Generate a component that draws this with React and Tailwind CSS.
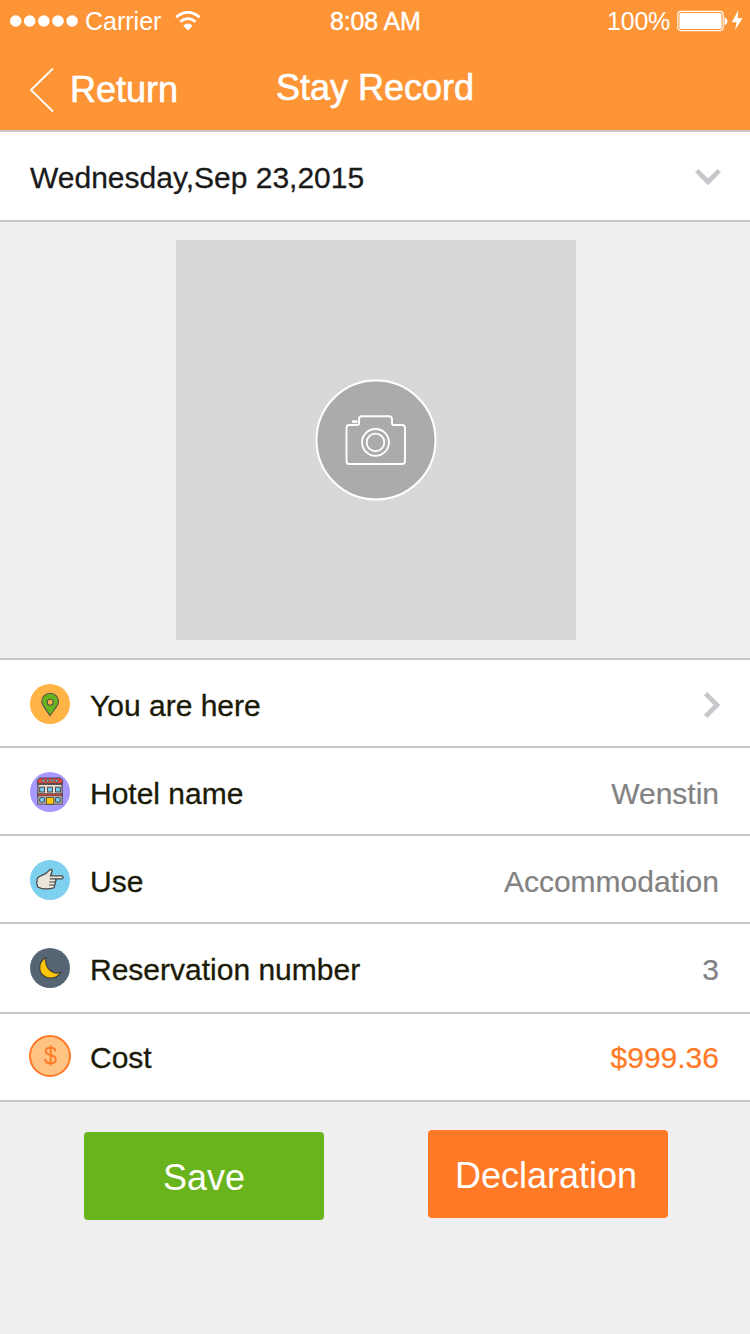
import React from "react";

function StatusBar() {
  return (
    <div className="relative flex h-[42px] items-center justify-between pl-[10px] pr-[7px] text-[25px]">
      <div className="flex items-center">
        <svg className="h-[14px] w-[70px]" viewBox="0 0 70 14" fill="#fff">
          <circle cx="5.7" cy="7" r="5.8" />
          <circle cx="19.7" cy="7" r="5.8" />
          <circle cx="33.8" cy="7" r="5.8" />
          <circle cx="48" cy="7" r="5.8" />
          <circle cx="62.1" cy="7" r="5.8" />
        </svg>
        <span className="ml-[5px] w-[78px] pt-px">Carrier</span>
        <svg className="ml-[12px] h-[20px] w-[26px]" viewBox="0 0 26 20" fill="none" stroke="#fff">
          <path d="M1.2 6.2 Q12.8 -3.6 24.6 6.2" strokeWidth="2.9" />
          <path d="M5.2 10.8 Q12.8 4.6 20.6 10.8" strokeWidth="2.7" />
          <path d="M8.2 14.8 Q12.8 10.4 17.6 14.8 L12.9 19.6 Z" fill="#fff" stroke="none" />
        </svg>
      </div>
      <div className="flex items-center">
        <span className="w-[63px] pt-px tracking-[-0.2px]">100%</span>
        <svg className="ml-[7px] h-[22px] w-[66px]" viewBox="0 0 66 22">
          <rect x="0.8" y="1.4" width="45.4" height="19.2" rx="3" fill="none" stroke="#fff" strokeWidth="1.1" />
          <rect x="2.4" y="3" width="42.2" height="16" rx="1.6" fill="#fff" />
          <path d="M47.5 7.2 Q50.4 8.4 50.4 11.2 Q50.4 14 47.5 15.2 Z" fill="#fff" />
          <path d="M61.2 0.2 L54.8 12.2 H59.6 L58 20 L65.6 8.2 H60.9 Z" fill="#fff" />
        </svg>
      </div>
      <span className="absolute left-[330px] top-[3px] leading-[37px] tracking-[-0.15px] [-webkit-text-stroke:0.4px_white]">8:08 AM</span>
    </div>
  );
}

function Header() {
  return (
    <header className="h-[132px] border-b-2 border-[#c8c7cc] bg-[#fd9536] text-white">
      <StatusBar />
      <div className="grid h-[88px] grid-cols-[276px_1fr] text-[36px] [-webkit-text-stroke:0.6px_white]">
        <div className="flex items-center pl-[29px] pt-[7px]">
          <svg className="h-[46px] w-[26px]" viewBox="0 0 26 46" fill="none" stroke="#fff" strokeWidth="1.8">
            <path d="M24 1.5 L2 23 L24 44.5" />
          </svg>
          <span className="ml-[15px]">Return</span>
        </div>
        <div className="flex items-center pt-[4px]">Stay Record</div>
      </div>
    </header>
  );
}

function PinIcon() {
  return (
    <svg className="size-[42px]" viewBox="0 0 42 42">
      <circle cx="21" cy="21" r="20" fill="#ffb445" />
      <path d="M21 32.6 C18 27.5 12.8 23 12.8 18.6 A8.3 8.3 0 0 1 29.5 18.6 C29.5 23 24.2 27.5 21 32.6 Z" fill="#69b41e" stroke="#51524a" strokeWidth="1.1" />
      <circle cx="21.2" cy="19.2" r="3" fill="#ffb445" stroke="#51524a" strokeWidth="1.1" />
    </svg>
  );
}

function HotelIcon() {
  return (
    <svg className="size-[42px]" viewBox="0 0 42 42">
      <circle cx="21" cy="21" r="20" fill="#a899ff" />
      <rect x="9" y="13" width="24" height="20" fill="#e6e0d6" stroke="#4c4544" strokeWidth="1.2" />
      <path d="M10.5 7 H31.5 L33.6 9.5 V12.8 H8.4 V9.5 Z" fill="#df4b3f" stroke="#4c4544" strokeWidth="1" />
      <path d="M9 13.2 H33" stroke="#4c4544" strokeWidth="1.4" strokeDasharray="1.5 1" />
      <g fill="#7dcdec" stroke="#4c4544" strokeWidth="0.7">
        <circle cx="14.5" cy="9.8" r="1.3" />
        <circle cx="18.8" cy="9.8" r="1.3" />
        <circle cx="23.2" cy="9.8" r="1.3" />
        <circle cx="27.5" cy="9.8" r="1.3" />
      </g>
      <g fill="#76cbee" stroke="#4c4544" strokeWidth="1">
        <rect x="10.7" y="16.2" width="4.8" height="4.8" />
        <rect x="18.6" y="16.2" width="4.8" height="4.8" />
        <rect x="26.5" y="16.2" width="4.8" height="4.8" />
      </g>
      <rect x="8.4" y="22.7" width="25.2" height="2.2" fill="#c9463b" stroke="#4c4544" strokeWidth="0.8" />
      <rect x="9.4" y="25.4" width="23.2" height="7.4" fill="#aaa6a0" />
      <g fill="#76cbee" stroke="#4c4544" strokeWidth="0.9">
        <rect x="10.7" y="26.6" width="4.8" height="4.6" rx="1.2" />
        <rect x="26.5" y="26.6" width="4.8" height="4.6" rx="1.2" />
      </g>
      <rect x="17.4" y="26.6" width="7.4" height="6.6" fill="#ffc60a" stroke="#4c4544" strokeWidth="0.8" />
    </svg>
  );
}

function HandIcon() {
  return (
    <svg className="size-[42px]" viewBox="0 0 42 42">
      <circle cx="21" cy="21" r="20" fill="#7dd1ef" />
      <path d="M8.3 19.4 C10 16.6 14 16.4 17 14.4 C19.3 12.5 20.4 10 22.8 10.5 C23.7 12 22.3 14.8 21.4 16.9 H33.2 Q35 18.4 33.2 19.8 H26.7 Q27.8 21.5 26 23 Q27.2 24.8 25.2 26 Q26.2 28.2 23.8 29.2 C20 30.4 16 30 12.3 29.4 L8.7 28 C7.6 25 7.6 22 8.3 19.4 Z" fill="#ebe5da" stroke="#4c4a49" strokeWidth="1.3" strokeLinejoin="round" />
      <path d="M26.7 19.8 H21.2 M26 23 H20.8 M25.2 26 H20.4" fill="none" stroke="#4c4a49" strokeWidth="1.2" strokeLinecap="round" />
    </svg>
  );
}

function MoonIcon() {
  return (
    <svg className="size-[42px]" viewBox="0 0 42 42">
      <circle cx="21" cy="21" r="20" fill="#566573" />
      <path d="M16.9 10.6 C9.6 14.2 9 23.8 14 28.2 C19.4 33 28.2 31.7 31.9 25.4 C23 28.2 15.2 20.5 16.9 10.6 Z" fill="#ffc60a" stroke="#46443c" strokeWidth="1.2" strokeLinejoin="round" />
    </svg>
  );
}

function CostIcon() {
  return (
    <svg className="size-[42px]" viewBox="0 0 42 42">
      <circle cx="21" cy="21" r="20" fill="#ffc384" stroke="#ff7926" strokeWidth="2" />
      <path d="M26.5 16.4 C26.3 14 24.4 12.6 21.5 12.6 C18.6 12.6 16.6 14 16.6 16.2 C16.6 21.2 26.8 18.7 26.8 24.2 C26.8 26.8 24.6 28.2 21.6 28.2 C18.2 28.2 16.1 26.6 16 23.9 M21.6 10.2 V30.4" fill="none" stroke="#ff7926" strokeWidth="1.9" />
    </svg>
  );
}

function CameraButton() {
  return (
    <svg className="size-[122px]" viewBox="0 0 122 122" fill="none" stroke="#fff" strokeWidth="2">
      <circle cx="61" cy="61" r="59.5" fill="#ababab" />
      <path d="M34.2 46 H42.2 Q44 46 44 44.2 V40.2 Q44 37.2 47 37.2 H74 Q77 37.2 77 40.2 V44.2 Q77 46 78.8 46 H87 Q90 46 90 49 V82 Q90 85 87 85 H34.2 Q31.5 85 31.5 82 V49 Q31.5 46 34.2 46 Z" strokeWidth="1.9" />
      <path d="M38 42.6 H41.2" strokeWidth="2.6" strokeLinecap="round" />
      <circle cx="60.5" cy="63.4" r="13.4" strokeWidth="1.9" />
      <circle cx="60.5" cy="63.4" r="8.8" strokeWidth="1.9" />
    </svg>
  );
}

const rows = [
  { icon: PinIcon, label: "You are here", height: "h-[88px]" },
  { icon: HotelIcon, label: "Hotel name", value: "Wenstin", height: "h-[88px]" },
  { icon: HandIcon, label: "Use", value: "Accommodation", height: "h-[88px]" },
  { icon: MoonIcon, label: "Reservation number", value: "3", height: "h-[90px]" },
  { icon: CostIcon, label: "Cost", value: "$999.36", height: "h-[88px]", accent: true },
];

function Row({ icon: Icon, label, value, height, accent }) {
  const line = accent ? "leading-[86px]" : "leading-[90px]";
  return (
    <li className={`flex items-start border-b-2 border-[#c8c8c8] bg-white pl-[29px] pr-[31px] ${height}`}>
      <div className={accent ? "pt-[21px]" : "pt-[23px]"}>
        <Icon />
      </div>
      <span className={`ml-[19px] pt-[1px] text-[#1a1a06] [-webkit-text-stroke:0.3px_#1a1a06] ${line}`}>{label}</span>
      {value ? (
        <span className={`ml-auto pt-[1px] ${line} ${accent ? "text-[#ff7926] [-webkit-text-stroke:0.2px_#ff7926]" : "text-[#828282] [-webkit-text-stroke:0.2px_#828282]"}`}>{value}</span>
      ) : (
        <svg className="-mr-[2px] ml-auto mt-[31px] h-[28px] w-[18px]" viewBox="0 0 18 28" fill="none" stroke="#c8c8cc" strokeWidth="4.8">
          <path d="M2.6 2.6 L14 14 L2.6 25.4" />
        </svg>
      )}
    </li>
  );
}

export default function App() {
  return (
    <div className="h-[1334px] w-[750px] overflow-hidden bg-[#efefef] font-['Liberation_Sans',Arial,sans-serif]">
      <Header />
      <div className="flex h-[90px] items-center justify-between border-b-2 border-[#c8c8c8] bg-white pl-[30px] pr-[28px] text-[30px] text-[#1a1a1a]">
        <span className="pt-[2px] [-webkit-text-stroke:0.3px_#1a1a1a]">Wednesday,Sep 23,2015</span>
        <svg className="mt-[2px] h-[18px] w-[28px]" viewBox="0 0 28 18" fill="none" stroke="#c8c8cc" strokeWidth="4.8">
          <path d="M2.8 2.6 L14 13.8 L25.2 2.6" />
        </svg>
      </div>
      <div className="flex h-[438px] justify-center border-b-2 border-[#c8c8c8] pl-[2px] pt-[18px]">
        <div className="flex size-[400px] items-center justify-center bg-[#d8d8d8]">
          <CameraButton />
        </div>
      </div>
      <ul className="text-[30px]">
        {rows.map((row) => (
          <Row key={row.label} {...row} />
        ))}
      </ul>
      <div className="flex items-start justify-between pl-[84px] pr-[82px] pt-[28px] text-[36px] text-white">
        <button className="mt-[2px] h-[88px] w-[240px] rounded-[4px] bg-[#69b31c] pt-[3px]">Save</button>
        <button className="h-[88px] w-[240px] rounded-[4px] bg-[#ff7926] pr-[4px] pt-[3px]">Declaration</button>
      </div>
    </div>
  );
}
